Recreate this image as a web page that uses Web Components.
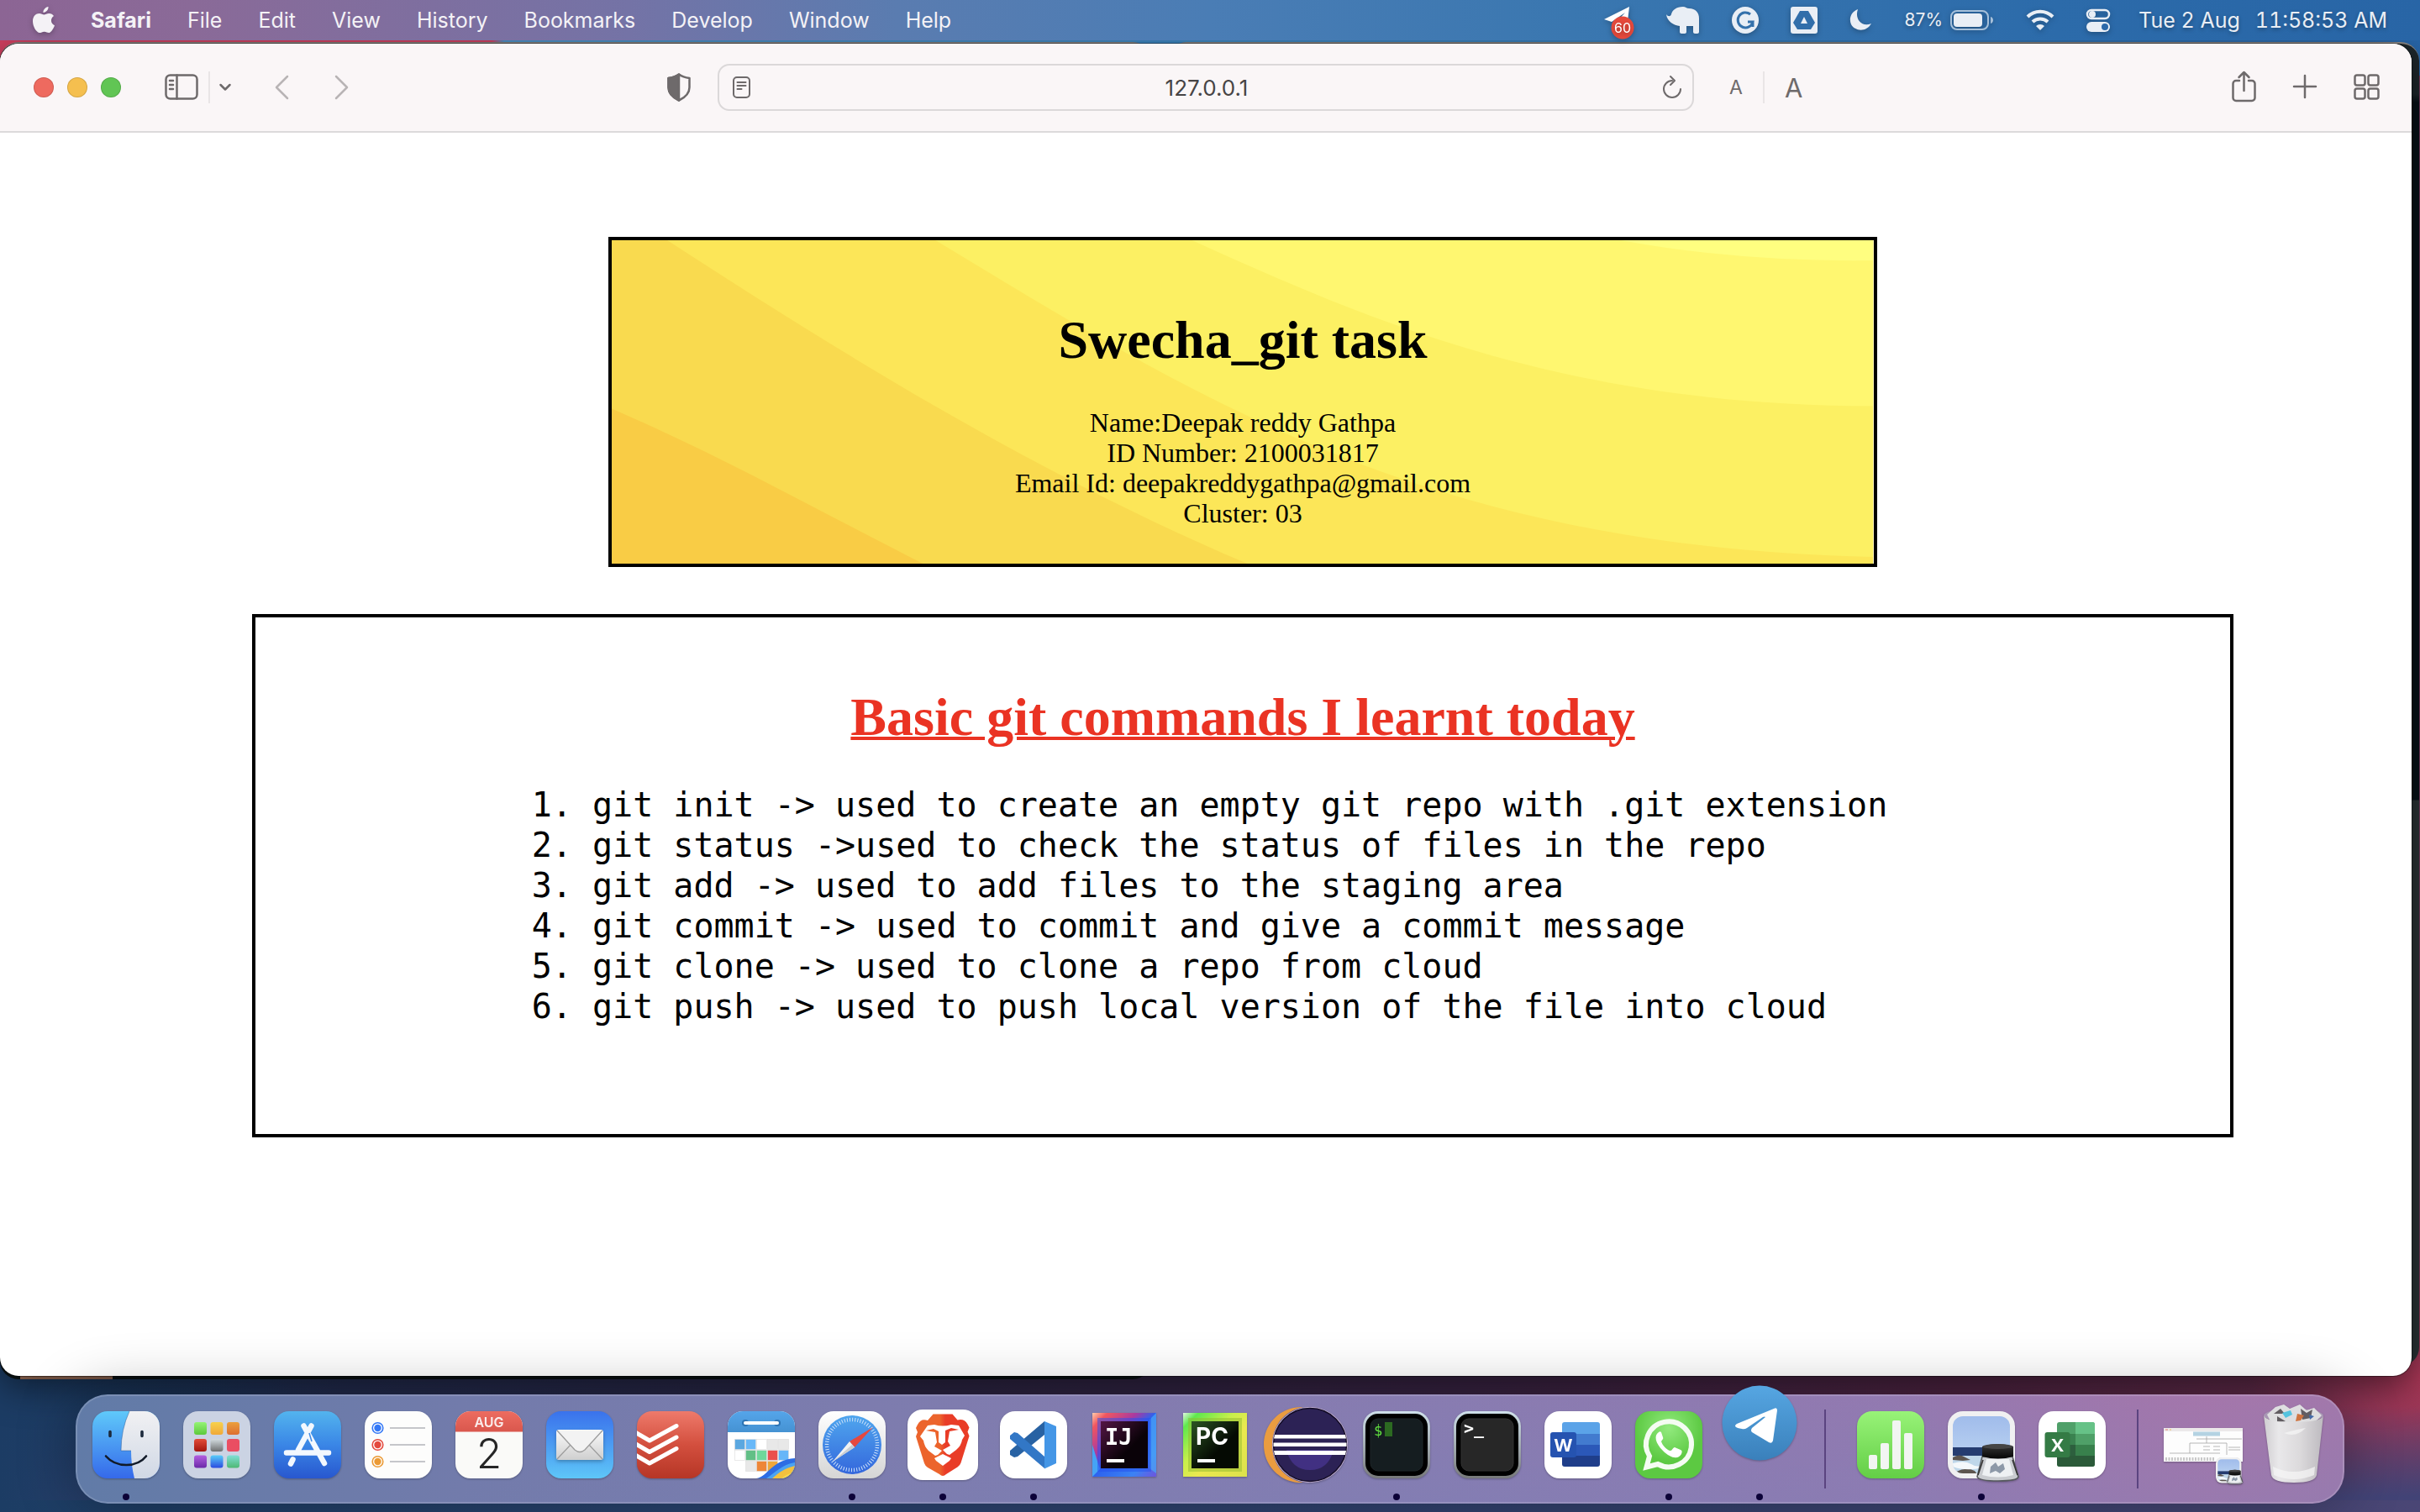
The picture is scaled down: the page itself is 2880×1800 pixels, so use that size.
<!DOCTYPE html>
<html lang="en">
<head>
<meta charset="utf-8">
<title>Swecha_git task</title>
<style>
  html, body { margin: 0; height: 100%; overflow: hidden; }
  body { font-family: Inter, "Liberation Sans", sans-serif; }
</style>
</head>
<body>
<mac-desktop>
  <menu-bar slot="menu"></menu-bar>
  <browser-window address="127.0.0.1">
    <intro-card heading="Swecha_git task">
      <div>Name:Deepak reddy Gathpa</div>
      <div>ID Number: 2100031817</div>
      <div>Email Id: deepakreddygathpa@gmail.com</div>
      <div>Cluster: 03</div>
    </intro-card>
    <command-list heading="Basic git commands I learnt today"></command-list>
  </browser-window>
  <dock-bar slot="dock"></dock-bar>
</mac-desktop>

<script>
const define = (name, render) => customElements.define(name, class extends HTMLElement {
  constructor() { super(); this.attachShadow({ mode: 'open' }); }
  connectedCallback() { this.shadowRoot.innerHTML = render(this); }
});
const BUTTON = 'button{appearance:none;border:0;background:none;padding:0;margin:0;font:inherit;color:inherit;display:flex;align-items:center;justify-content:center}svg{display:block;overflow:visible}';

/* Desktop: wallpaper, windows peeking out behind the browser, and the three rows */
define('mac-desktop', () => `
<style>
  :host { display:flex; flex-direction:column; height:100vh; box-sizing:border-box; padding-bottom:10px; position:relative; overflow:hidden;
    background:
      linear-gradient(180deg, #42437600 93%, #424376 99%),
      radial-gradient(ellipse 200px 170px at 100% 91%, #a83655 0, #a8365500 100%),
      linear-gradient(90deg, #1c3c64 0, #26325a 12%, #2f2a4c 35%, #40284c 60%, #5a294b 82%, #6b3052 94%, #753a5e 100%); }
  .top { position:absolute; left:0; right:0; top:0; height:90px; background:linear-gradient(90deg,#cf4060 0 585px,#4c90c6 600px,#3d86c0 50%,#2765a8 100%); }
  .low { position:absolute; left:0; right:0; bottom:0; height:14px; background:linear-gradient(90deg,#1c3d64,#2a4470 30%,#33426f 65%,#4a4675); }
  .left-glow { position:absolute; left:0; bottom:0; width:400px; height:170px; background:linear-gradient(90deg,#1c3c64,#1c3c6400); }
  .back { position:absolute; box-sizing:border-box; background:#0c1517; border-top:2px solid #8b8784; }
  .a { left:0; top:50px; width:1370px; height:1592px; border-radius:22px; }
  .b { left:1390px; right:1px; top:50px; height:1576px; border-radius:22px; background:linear-gradient(#1d272c 0 60px,#071118 70px 900px,#2a3336 901px); }
  .note { position:absolute; left:24px; top:1618px; width:110px; height:24px; overflow:hidden; background:#a8775f; }
  .stack { position:relative; flex:1; min-height:0; display:flex; flex-direction:column; }
  .win { flex:1; min-height:0; display:flex; margin:4px 10px 22px 0; }
</style>
<div class="top"></div><div class="left-glow"></div><div class="low"></div><div class="back a"></div><div class="back b"></div><div class="note"></div>
<div class="stack"><slot name="menu"></slot><div class="win"><slot></slot></div><slot name="dock"></slot></div>`);

/* Menu bar */
define('menu-bar', () => `
<style>${BUTTON}
  :host { display:flex; align-items:center; height:48px; padding:0 39px; box-sizing:border-box; justify-content:space-between; position:relative; z-index:1;
    color:#f4f2f6; font-size:25px; font-weight:500; line-height:32px; text-shadow:0 2px 5px #0005;
    background:linear-gradient(90deg,#8c6594 0,#8a6a98 8%,#7473a6 26%,#5a7cb0 37%,#4a7db5 50%,#3a77b0 65%,#2c6baa 85%,#2865a6 100%); }
  nav, .status { display:flex; align-items:center; }
  nav { gap:43px; font-weight:400; }
  nav button:nth-child(2) { font-weight:700; }
  svg { filter:drop-shadow(0 2px 3px #0004); }
  .status { gap:38px; color:#e9eef5; fill:#e9eef5; font-weight:400; }
  .status .clock { gap:18px; display:flex; margin-left:-4px; white-space:pre; font-variant-numeric:tabular-nums; }
  .bat { display:flex; align-items:center; gap:9px; font-size:21px; }
</style>
<nav>
  <button aria-label="Apple"><svg width="26" height="32" viewBox="0 0 26 32" fill="#f4f2f6"><path d="M18.500 0c.4 3.400-2.700 7-6 6.900C12.100 3.700 15.300.4 18.500 0zM25 11c-4.500 3-3.700 9.300 1 11.300-1 3-3.500 7.700-6 8.600-2.200.6-3.600-1.200-6.300-1.200s-4 1.700-6 1.300C4 30.200 0 23.500 0 17.300 0 11 4 8 7.600 8c2.300 0 4.300 1.500 5.800 1.500S17 7.900 19.500 8c2.300.1 4.200 1.100 5.500 3z"/></svg></button>
  <button>Safari</button><button>File</button><button>Edit</button><button>View</button><button>History</button><button>Bookmarks</button><button>Develop</button><button>Window</button><button>Help</button>
</nav>
<div class="status">
  <svg width="36" height="32" viewBox="0 0 36 32"><path d="M0 15 30 0 27 26 13 20 25 7 9 18z" fill="#fff"/><circle cx="22" cy="25" r="13.500" fill="#e5493c"/><text x="22" y="31" text-anchor="middle" font-size="16" font-weight="400" fill="#fff" font-family="Inter">60</text></svg>
  <svg width="40" height="32" viewBox="0 0 40 32"><path d="M0 9c2 3 5 3 6 0C7 4 12 0 20 0c3 0 4 2 7 2 8 0 12 5 12 12v16c0 1-1 2-2 2h-3c-1 0-2-1-2-2v-7h-8v7c0 1-1 2-2 2h-4c-1 0-2-1-2-2v-7C9 22 1 18 0 9z"/></svg>
  <svg width="32" height="32" viewBox="0 0 32 32"><circle cx="16" cy="16" r="16"/><path d="M22 9a9 9 0 1 0 3 9h-6M25 24v-6" fill="none" stroke="#3471ab" stroke-width="3"/></svg>
  <svg width="32" height="32" viewBox="0 0 32 32"><rect width="32" height="32" rx="3"/><path d="M11 5h10l8 14-5 8H8l-5-8z" fill="#316eaa"/><path d="M16 12l4 8h-8z"/></svg>
  <svg width="28" height="28" viewBox="0 0 28 28"><path d="M10 1C2 4-1 12 2 19c4 8 18 10 24-1C14 23 6 12 10 1z"/></svg>
  <div class="bat"><span>87%</span><svg width="52" height="24" viewBox="0 0 52 24"><rect x="1" y="1" width="44" height="22" rx="7" fill="none" stroke="#a6c0da" stroke-width="2"/><rect x="4" y="4" width="34" height="16" rx="4"/><path d="M48 8c4 1 4 7 0 8z" fill="#a6c0da"/></svg></div>
  <svg width="34" height="26" viewBox="0 0 34 26" fill="none" stroke="#e9eef5" stroke-width="4"><path d="M2 9a21 21 0 0 1 30 0M8 15a13 13 0 0 1 18 0"/><path d="M17 25l-5-5a7 7 0 0 1 10 0z" fill="#e9eef5" stroke="none"/></svg>
  <svg width="28" height="28" viewBox="0 0 28 28"><rect x="1" y="2" width="26" height="10" rx="5" fill="none" stroke="#e9eef5" stroke-width="2.500"/><circle cx="7" cy="7" r="4"/><rect y="16" width="28" height="12" rx="6"/><circle cx="22" cy="22" r="4" fill="#2c69a9"/></svg>
  <div class="clock"><span>Tue 2 Aug</span><span>11:58:53 AM</span></div>
</div>`);

/* Browser window */
define('browser-window', el => `
<style>${BUTTON}
  :host { flex:1; display:flex; flex-direction:column; background:#fff; border-radius:22px; overflow:hidden; box-shadow:0 0 0 1px #0006, 0 12px 44px #0008; }
  header { display:grid; grid-template-columns:1fr minmax(0,1162px) 1fr; align-items:center; height:104px; background:#faf6f7; border-bottom:2px solid #dcdadb; color:#6e6a6b; }
  .side { display:flex; align-items:center; }
  .left { padding:0 32px 0 40px; } .right { padding:0 38px 0 42px; }
  .lights { display:flex; gap:16px; margin-right:52px; }
  .lights button { width:24px; height:24px; border-radius:50%; box-shadow:inset 0 0 0 1px #0002; }
  .sep { width:2px; height:38px; background:#e9e5e6; }
  .push { margin-left:auto; }
  form { height:56px; box-sizing:border-box; border:2px solid #dbd8d9; border-radius:14px; display:flex; align-items:center; padding:0 13px 0 16px; }
  input { flex:1; min-width:0; border:0; background:none; outline:0; text-align:center; font:400 26px/32px Inter,"Liberation Sans",sans-serif; color:#474445; padding:2px 0 0; }
  svg { fill:none; stroke:currentColor; stroke-width:2.500; stroke-linecap:round; stroke-linejoin:round; }
  .tools { display:flex; gap:44px; }
  main { flex:1; min-height:0; display:flex; flex-direction:column; align-items:center; gap:56px; padding:124px 212px 0 300px; box-sizing:border-box; }
</style>
<header>
  <div class="side left">
    <div class="lights"><button aria-label="Close" style="background:#ee6a5f"></button><button aria-label="Minimise" style="background:#f5bf4f"></button><button aria-label="Zoom" style="background:#61c554"></button></div>
    <button aria-label="Sidebar"><svg width="40" height="32" viewBox="0 0 40 32"><rect x="1.500" y="1.500" width="37" height="28" rx="5"/><path d="M14.500 1.500v28M6 8h4M6 13h4M6 18h4"/></svg></button>
    <div class="sep" style="margin:0 11px 0 12px"></div>
    <button aria-label="Tab groups"><svg width="14" height="10" viewBox="0 0 14 10" stroke-width="3"><path d="M1.500 2 7 7.500 12.500 2"/></svg></button>
    <button aria-label="Back" style="margin-left:52px;color:#b8b4b5"><svg width="16" height="28" viewBox="0 0 16 28"><path d="M15 1 2 14l13 13"/></svg></button>
    <button aria-label="Forward" style="margin-left:56px;color:#b8b4b5"><svg width="16" height="28" viewBox="0 0 16 28"><path d="m1 1 13 13L1 27"/></svg></button>
    <button class="push" aria-label="Privacy report"><svg width="28" height="34" viewBox="0 0 28 34"><path d="M14 1.500c4 3 8 4 12.500 4.500v11c0 7-5 12-12.500 15.500C6.500 29 1.500 24 1.500 17V6C6 5.500 10 4.500 14 1.500z"/><path d="M14 1.500v31C6.500 29 1.500 24 1.500 17V6C6 5.500 10 4.500 14 1.500z" fill="currentColor"/></svg></button>
  </div>
  <form>
    <button type="button" aria-label="Reader"><svg width="21" height="26" viewBox="0 0 21 26" style="stroke-width:2"><rect x="1" y="1" width="19" height="24" rx="4"/><path d="M5.500 7h10M5.500 11h10M5.500 15h5"/></svg></button>
    <input aria-label="Address" value="${el.getAttribute('address')}">
    <button type="button" aria-label="Reload"><svg width="22" height="26" viewBox="0 0 22 26" style="stroke-width:2"><path d="M11 5A10 10 0 1 0 21 15M9 0l5 5-5 5"/></svg></button>
  </form>
  <div class="side right">
    <button style="font-size:23px" aria-label="Smaller text">A</button>
    <div class="sep" style="margin:0 24px"></div>
    <button style="font-size:31px" aria-label="Larger text">A</button>
    <div class="tools push">
      <button aria-label="Share"><svg width="29" height="38" viewBox="0 0 29 38"><path d="M9 11H5a3.500 3.500 0 0 0-3.500 3.500v17A3.500 3.500 0 0 0 5 35h19a3.500 3.500 0 0 0 3.500-3.500v-17A3.500 3.500 0 0 0 24 11h-4M14.500 23V1M8.500 7l6-6 6 6"/></svg></button>
      <button aria-label="New tab"><svg width="28" height="28" viewBox="0 0 28 28"><path d="M14 0v26M1 13h26"/></svg></button>
      <button aria-label="Tab overview"><svg width="31" height="31" viewBox="0 0 31 31"><rect x="1.500" y=".5" width="12" height="12" rx="2.500"/><rect x="17.500" y=".5" width="12" height="12" rx="2.500"/><rect x="1.500" y="16.500" width="12" height="12" rx="2.500"/><rect x="17.500" y="16.500" width="12" height="12" rx="2.500"/></svg></button>
    </div>
  </div>
</header>
<main><slot></slot></main>`);

const PAGE_TEXT = 'h1{margin:43px 0 44px;font-size:64px;line-height:72px;font-weight:700;text-align:center}';

/* Yellow card with the wave artwork behind its text */
define('intro-card', el => `
<style>${PAGE_TEXT}
  :host { display:block; position:relative; width:64%; box-sizing:border-box; border:4px solid #000; padding:40px 40px 42px; text-align:center;
    font:32px/36px "Liberation Serif","Times New Roman",serif; color:#000; overflow:hidden; }
  svg { position:absolute; inset:0; width:100%; height:100%; }
  .text { position:relative; display:flow-root; }
</style>
<svg viewBox="0 0 1500 384" preserveAspectRatio="none" aria-hidden="true">
  <rect width="1500" height="384" fill="#f9cc45"/>
  <path d="M0 200C130 256 240 318 370 384H1500V0H0z" fill="#f9da4f"/>
  <path d="M66 0C260 126 500 276 756 384H1500V0z" fill="#fce658"/>
  <path d="M385 0C700 190 970 364 1500 376V0z" fill="#fcf063"/>
  <path d="M690 0C900 95 1130 196 1500 197V0z" fill="#fff770"/>
  <path d="M1200 0Q1340 26 1500 24V0z" fill="#fffe80"/>
</svg>
<div class="text"><h1>${el.getAttribute('heading')}</h1><slot></slot></div>`);

const COMMANDS = [
  'git init -> used to create an empty git repo with .git extension',
  'git status ->used to check the status of files in the repo',
  'git add -> used to add files to the staging area',
  'git commit -> used to commit and give a commit message',
  'git clone -> used to clone a repo from cloud',
  'git push -> used to push local version of the file into cloud'
];
define('command-list', el => `
<style>${PAGE_TEXT}
  :host { display:flow-root; width:100%; box-sizing:border-box; border:4px solid #000; padding:40px 0; font-family:"Liberation Serif","Times New Roman",serif; }
  h1 { color:#ea3323; text-decoration:underline; text-decoration-thickness:4px; }
  ol { margin:0; padding:0 0 88px 401px; font:40px/48px "DejaVu Sans Mono",monospace; color:#000; }
</style>
<h1>${el.getAttribute('heading')}</h1>
<ol>${COMMANDS.map(c => `<li>${c.replace('>', '&gt;')}</li>`).join('')}</ol>`);

/* Dock artwork: every icon is drawn on an 80-unit tile */
const lg = (id, ...c) => `<linearGradient id="${id}" x2="0" y2="1">${c.map((k, i) => `<stop offset="${i / (c.length - 1)}" stop-color="${k}"/>`).join('')}</linearGradient>`;
const tile = fill => `<rect width="80" height="80" rx="18" fill="${fill}"/>`;
const clip = '<clipPath id="c"><rect width="80" height="80" rx="18"/></clipPath>';
const sq = (x, y, f, s = 15, r = 3) => `<rect x="${x}" y="${y}" width="${s}" height="${s}" rx="${r}" fill="${f}"/>`;
const previewArt = `${lg('s', '#9db9ea', '#b4cdf0')}${lg('k', '#3a3a3a', '#050505')}${tile('#f0f0f1')}
  <clipPath id="p"><rect x="6" y="6" width="68" height="68" rx="12"/></clipPath>
  <g clip-path="url(#p)"><rect width="80" height="44" fill="url(#s)"/><rect y="43" width="80" height="11" fill="#253c70"/><rect y="53" width="80" height="22" fill="#bfd7ea"/>
  <path d="M6 55q8-5 15 0l6 3-9 1-12-1zM10 72q12-6 22-1l4 5H8z" fill="#5d554f"/><path d="M6 62q14-4 22 1t14 0v4q-20 5-36-1z" fill="#f4f8fb"/></g>
  <path d="M41 54h36l7 24q-1 5-24 5t-25-5z" fill="#c9ccd0" stroke="#55585c" stroke-width="1.500"/><path d="M46 57h27l5 19q-18 5-37 0z" fill="#eef1f3"/>
  <path d="M51 66l6-5 3 5 6-4 2 7-6 5-5-3-7 3z" fill="#8d99a8"/><path d="M36 76l6-18M83 76l-6-18" stroke="#333" stroke-width="1.500"/>
  <path d="M41 42q18-6 37 0v12q-18 5-37 0z" fill="url(#k)"/><ellipse cx="59.500" cy="42" rx="18" ry="3" fill="#454545"/>`;
const cells = [['#5aa7e0','#68b8f8','#fff','#e8e8e8','#e8e8e8'],['#fff','#62bf86','#6fd89b','#eb4f4d','#67b6f8'],[null,'#e8e8e8','#ee8638','#eea73c']];
const keyTile = (dark, screen) => `${lg('a', '#cfe0ea', '#77797a')}${tile('url(#a)')}<rect x="3" y="3" width="74" height="74" rx="15" fill="#000"/><rect x="9" y="9" width="62" height="62" rx="9" fill="${screen}" stroke="${dark}"/>`;

const APPS = [
 ['Finder', 1, `${clip}${lg('a','#5fc9fa','#3569ea')}${lg('b','#f1f1f3','#d0d8e5')}<g clip-path="url(#c)"><rect width="80" height="80" fill="url(#a)"/><path d="M44 0Q34 22 34 47h12q0 17 4 33h30V0z" fill="url(#b)"/></g><path d="M21 24.500v5M59 24.500v5" stroke="#1d2a3c" stroke-width="3.600" stroke-linecap="round"/><path d="M16 53.500c12 14 37 14 48 0" fill="none" stroke="#111a28" stroke-width="2.600" stroke-linecap="round"/><path d="M44 0Q34 22 34 47h12" fill="none" stroke="#2f5d96" stroke-opacity=".5"/>`],
 ['Launchpad', 0, `${tile('#cbd3e3')}${lg('a','#94f375','#5cc93c')}${lg('b','#f7d14c','#f0a93a')}${lg('d','#eba03c','#dd6e31')}${lg('e','#e34b39','#a3160f')}${lg('f','#d3dce0','#6d6f70')}${lg('g','#b35fe0','#6b2aa8')}${lg('h','#58ccf9','#2b4be0')}${lg('i','#80dfd6','#4fb873')}
   ${sq(13,13,'url(#a)')}${sq(32.5,13,'url(#b)')}${sq(52,13,'url(#d)')}${sq(13,33,'url(#e)')}${sq(32.5,33,'url(#f)')}${sq(52,33,'#ea4e62')}${sq(13,52.5,'url(#g)')}${sq(32.5,52.5,'url(#h)')}${sq(52,52.5,'url(#i)')}`],
 ['App Store', 0, `${lg('a','#53b4ee','#3a86e6','#2857cf')}${tile('url(#a)')}<g stroke="#f3f8fe" stroke-width="6.500" stroke-linecap="round" fill="none"><path d="M44.500 17.500 29 46M15 49.500h50M22.500 57.500l-2.500 5M35.500 17.500 60 62"/></g><path d="M42 26l3 10" stroke="#3d8ae6" stroke-width="1.500"/>`],
 ['Reminders', 0, `${tile('#fdfdfc')}<g stroke="#b3b4b9" stroke-width="1.600"><path d="M30 20h42M30 40h42M30 60h42"/></g>${[['#3478f6',20],['#e4493d',40],['#eb9a35',60]].map(([c,y])=>`<circle cx="15.500" cy="${y}" r="6.300" fill="#fff" stroke="${c}" stroke-width="1.600"/><circle cx="15.500" cy="${y}" r="4.200" fill="${c}"/>`).join('')}`],
 ['Calendar', 0, `${clip}${lg('a','#ed6c60','#d9574d')}${tile('#fafaf8')}<rect width="80" height="24.500" fill="url(#a)" clip-path="url(#c)"/><text x="40" y="19" text-anchor="middle" font-size="16" font-weight="600" fill="#fbeceb">AUG</text><text x="40" y="68" text-anchor="middle" font-size="49" font-weight="300" fill="#262626">2</text>`],
 ['Mail', 0, `${lg('a','#3a72ec','#5ec6f8')}${lg('b','#fafafa','#cfcfcf')}${tile('url(#a)')}<rect x="12" y="22" width="56" height="36" rx="3" fill="url(#b)" filter="drop-shadow(0 2px 2px #0004)"/><path d="M13 57l16-17M67 57 51 40" stroke="#9d9d9d" stroke-width="1.200"/><path d="M13 23l21 23q6 5 12 0l21-23" fill="#f3f3f3" stroke="#9d9d9d" stroke-width="1.300"/>`],
 ['Todoist', 0, `${clip}${lg('a','#ee7a6b','#d34f3e','#b63626')}${tile('url(#a)')}<g clip-path="url(#c)" fill="none" stroke="#fff" stroke-width="5" stroke-linejoin="round" stroke-linecap="round"><path d="M-3 24.500 15 35 47 17.500M-3 38 15 48.500 47 31M-3 51.500 15 62 47 44.500"/></g>`],
 ['Fantastical', 0, `${clip}${lg('a','#55a5ea','#4592d2')}${tile('#fff')}<g clip-path="url(#c)"><rect width="80" height="25" fill="url(#a)"/>${cells.map((r,j)=>r.map((f,i)=>f?`<rect x="${8.5+i*13}" y="${33.5+j*13}" width="12" height="12" fill="${f}" stroke="#ddd" stroke-width=".6"/>`:'').join('')).join('')}<path d="M34 80C48 78 52 58 80 56V80z" fill="#2d6de4"/><path d="M46 80C58 72 64 64 80 61v19z" fill="#4ba3f2"/><path d="M53 80C62 72 68 68 80 65v15z" fill="#f3c13e"/><path d="M64 80q7-6 16-7v7z" fill="#f7dc4b"/></g><circle cx="21" cy="14" r="4" fill="#2d74b4"/><circle cx="59" cy="14" r="4" fill="#2d74b4"/><path d="M21 14h38" stroke="#fff" stroke-width="4" stroke-linecap="round"/>`],
 ['Safari', 1, `${lg('a','#fff','#d5d5d5')}${lg('b','#4fa6ee','#3467dc')}${tile('url(#a)')}<circle cx="40" cy="40" r="35" fill="url(#b)"/><circle cx="40" cy="40" r="30" fill="none" stroke="#cde2fa" stroke-width="4.500" stroke-dasharray="1 2.140"/><path d="M65 19 37 36l6 7z" fill="#e5483f"/><path d="M17 60l20-24 6 7z" fill="#f2f2f2"/><path d="M17 60l26-17-3-3z" fill="#c9cdd2"/>`],
 ['Brave', 1, `<linearGradient id="a"><stop offset=".45" stop-color="#ec642c"/><stop offset=".55" stop-color="#e93c27"/></linearGradient><rect x="-2" y="-2" width="84" height="84" rx="18" fill="#fff"/><path d="M28.500 3.500h23l6 7q8-2 12 5l2 4-2 5 2 5-10 32q-1 3-4 5L44 75q-4 4-8 0L22 67q-3-2-4-5L8 30l2-5-2-5 2-4q4-8 12-5z" fill="url(#a)"/><path d="M22 17l8-1q10 3 20 0l9 1 7 12-3 5q-1 7-7 12l-8 6-3-1-5-5 9-5-3-5 2-12 11-2-9-2-7 3v14l-4 3-4-3V24l-6-3-9 2 11 2 2 12-3 5 9 5-5 5-3 1-8-6q-5-5-6-12l-4-5z" fill="#fff"/><path d="M40 51l10 5-2 3-8 6-8-6-2-3z" fill="#fff"/>`],
 ['Visual Studio Code', 1, `${tile('#fff')}<path d="M53 12 12 47v5l5 3 4-1 32-26z" fill="#2862a3"/><path d="M17 25l-5 4v4l41 35V54L21 26z" fill="#3277c6"/><path d="M53 12l14 6v44l-14 6.500z" fill="#4496e6"/>`],
 ['IntelliJ IDEA', 0, `<linearGradient id="a" x2="1" y2="1"><stop stop-color="#fca"/><stop offset=".12" stop-color="#f0565f"/><stop offset=".35" stop-color="#a93aa0"/><stop offset=".5" stop-color="#2d62ee"/><stop offset=".8" stop-color="#3b82f4"/><stop offset="1" stop-color="#6e55dd"/></linearGradient><linearGradient id="b" x2="1" y2="1"><stop stop-color="#541645"/><stop offset=".6" stop-color="#0a0208"/></linearGradient><rect x="2" y="2" width="76" height="76" fill="url(#a)"/><path d="M78 2v72l-8-6V10z" fill="#4aa6f5" opacity=".7"/><path d="M2 40v38l9-9z" fill="#45a4f5"/><rect x="8" y="8" width="64" height="64" fill="#234ff0" opacity=".5"/><rect x="12" y="12" width="56" height="56" fill="url(#b)"/><text x="17" y="40" font-family="DejaVu Sans Mono" font-weight="700" font-size="27" fill="#fff">IJ</text><rect x="19" y="57" width="21" height="4" fill="#fff"/>`],
 ['PyCharm', 0, `<linearGradient id="a" x2="1" y2="1"><stop stop-color="#dff7e0"/><stop offset=".12" stop-color="#5fe84d"/><stop offset=".4" stop-color="#c8f04b"/><stop offset=".6" stop-color="#ebe84f"/><stop offset="1" stop-color="#dbe24b"/></linearGradient><linearGradient id="b" x2="1" y2="1"><stop stop-color="#2b5522"/><stop offset=".6" stop-color="#050a03"/></linearGradient><rect x="2" y="2" width="76" height="76" fill="url(#a)"/><rect x="8" y="8" width="64" height="64" fill="#8fb92f" opacity=".5"/><rect x="12" y="12" width="56" height="56" fill="url(#b)"/><text x="17" y="40" font-weight="700" font-size="28" fill="#fff">PC</text><rect x="19" y="57" width="21" height="4" fill="#fff"/>`],
 ['Eclipse', 0, `<path d="M37-5C11-6-10 14-10 40s21 46 47 45C13 80 0 62 0 40S13 0 37-5z" fill="#ea9c40"/><circle cx="45" cy="40" r="45" fill="#c9b5d8"/><circle cx="45" cy="40" r="43.500" fill="#2c2255" stroke="#120c25" stroke-width="1.500"/><path d="M17 46h56q-6 24-28 24T17 46z" fill="#413082"/><g fill="#fff"><path d="M3 28h84l1 4.500H2zM1.500 37.500h87v4.500h-87zM2 47h86l-1 5H3z"/></g>`],
 ['iTerm', 1, `${keyTile('#1f2729','#151d20')}<text x="13" y="29" font-family="DejaVu Sans Mono" font-size="17" fill="#5fdc3f">$</text><rect x="26" y="13" width="9" height="17" fill="#2c6a21"/>`],
 ['Terminal', 0, `${keyTile('#333','#272727')}<text x="12" y="27" font-family="DejaVu Sans Mono" font-weight="700" font-size="20" fill="#fff">&gt;_</text>`],
 ['Word', 0, `${tile('#fff')}<clipPath id="d"><rect x="21" y="13" width="45" height="53" rx="3"/></clipPath><g clip-path="url(#d)"><rect x="21" y="13" width="45" height="14" fill="#5ba3e8"/><rect x="21" y="27" width="45" height="13" fill="#427bcf"/><rect x="21" y="40" width="45" height="13" fill="#2b58b8"/><rect x="21" y="53" width="45" height="13" fill="#1f3e8a"/></g><rect x="7" y="25" width="31" height="30" rx="3" fill="#2553b0"/><text x="22.500" y="48" text-anchor="middle" font-family="Open Sans" font-weight="700" font-size="22" fill="#fff">W</text>`],
 ['WhatsApp', 1, `<radialGradient id="a" cy=".25"><stop stop-color="#92ea7e"/><stop offset="1" stop-color="#5cc942"/></radialGradient>${tile('url(#a)')}<path d="M13.500 66.500l3.500-13a27 27 0 1 1 10 9.500z" fill="none" stroke="#f4fcf2" stroke-width="6"/><path d="M28 25c-6 4-4 13 5 22 9 9 18 11 22 4 1-3 1-4-1-5l-7-3c-2 0-3 4-5 4-4 0-10-7-11-11 1-2 3-3 2-5l-2-6c-1-1-2-1-3 0z" fill="#fff"/>`],
 ['Telegram', 1, `${lg('a','#56a6e2','#3a80bb')}<circle cx="40" cy="14" r="44.500" fill="url(#a)"/><path d="M17 15 61-3q4-2 4 2l-5 36q-1 4-5 2L35 25q-2-2 0-5L51 7q-1-1-3 0L29 20q-3 2-6 1-12-2-6-6z" fill="#fff" transform="translate(-4 0)"/>`],
 null,
 ['Numbers', 0, `${lg('a','#98f378','#63ce46')}${tile('url(#a)')}<g fill="#f2f5f2"><rect x="14" y="52" width="10" height="17" rx="2"/><rect x="28" y="38" width="10" height="31" rx="2"/><rect x="42" y="11" width="10" height="58" rx="2"/><rect x="56" y="26" width="10" height="43" rx="2"/></g>`],
 ['Preview', 1, previewArt],
 ['Excel', 0, `${tile('#fff')}<clipPath id="d"><rect x="22" y="13" width="45" height="53" rx="3"/></clipPath><g clip-path="url(#d)"><rect x="22" y="13" width="45" height="53" fill="#4fa069"/><rect x="44" y="13" width="23" height="14" fill="#66c287"/><rect x="22" y="27" width="22" height="13" fill="#3a8250"/><rect x="44" y="27" width="23" height="13" fill="#4fa068"/><rect x="22" y="40" width="22" height="13" fill="#2d5f3e"/><rect x="44" y="40" width="23" height="13" fill="#38804c"/><rect x="22" y="53" width="45" height="13" fill="#2b5a39"/></g><rect x="7.500" y="25" width="30" height="30" rx="3" fill="#347b45"/><text x="22.500" y="48" text-anchor="middle" font-family="Open Sans" font-weight="700" font-size="22" fill="#fff">X</text>`],
 null,
 ['Minimised document', 0, `<rect x="-7" y="20" width="94" height="40" fill="#fdfdfd"/><rect x="-7" y="20" width="94" height="4" fill="#ece9ea"/><path d="M-5 22h3" stroke="#e9836f"/><path d="M0 22h2" stroke="#f0bf60"/><rect x="28" y="24.500" width="32" height="5" fill="#b4d2e2"/><g stroke="#a5a5a5" stroke-width=".8" fill="none"><path d="M44 30v8M32 33h26M58 33h28M24 38h44M24 38v12M68 38v14M0 50h60M40 42h8M52 42h8M40 46h8M52 46h8M70 43h14M70 46h14"/><path d="M-5 57h58" stroke-width="4" stroke-dasharray="2 1.500" opacity=".6"/></g><svg x="55" y="55" width="32" height="32" viewBox="0 0 84 84">${previewArt}</svg>`],
 ['Bin', 0, `<linearGradient id="a"><stop stop-color="#cfcdd0"/><stop offset=".25" stop-color="#e9e8ea"/><stop offset=".6" stop-color="#dcdadc"/><stop offset="1" stop-color="#bdbabf"/></linearGradient><ellipse cx="39.500" cy="5" rx="35.500" ry="8" fill="#a896b4"/><path d="M8 4 18-5l10-3 7 5 12-5 8 7 9-3 9 9-9 9-30 2L12 12z" fill="#dedee0"/><path d="M16 3l8-6 5 6zM48-3l7 5 7-4-2 10-10 2zM20 6l10 6-10 1z" fill="#625d62"/><path d="M26 2l10-3 2 5-8 4z" fill="#55c3df"/><path d="M44 3l8 2-4 6-6 1z" fill="#cf7440"/><path d="M58 4l6 2-5 4z" fill="#446ba8"/><path d="M4 5q3 8 36 8t35-8L67 76q-2 9-27 9t-27-9z" fill="url(#a)"/><path d="M28 26q14 6 26-6-8 1-26 6zM15 66q24 12 50 0l-1 10q-24 10-48 0z" fill="#f6f6f7" opacity=".7"/>`]
];

define('dock-item', el => {
  const [name, running, art] = APPS[+el.getAttribute('app')];
  return `
<style>${BUTTON}
  :host { display:block; flex:0 1 108px; }
  button { width:100%; height:130px; flex-direction:column; position:relative; }
  svg { font-family:Inter,sans-serif; filter:drop-shadow(0 1px 1px #0004); }
  i { position:absolute; left:50%; bottom:4px; width:8px; height:8px; margin-left:-4px; border-radius:50%; background:#0c0238; }
</style>
<button aria-label="${name}"><svg width="108" height="130" viewBox="-14 -20 108 130">${art}</svg>${running ? '<i></i>' : ''}</button>`;
});

define('dock-bar', () => `
<style>
  :host { display:flex; align-self:center; height:130px; padding:0 6px; border-radius:38px; position:relative;
    background:linear-gradient(172deg,#0000 35%,#6a86bd66 100%),linear-gradient(90deg,#617ba7 0,#727bab 17%,#7d7cae 35%,#8a7bb0 60%,#9a77ae 80%,#b472a6 94%,#b473a5 100%);
    box-shadow:inset 0 0 0 2px #ffffff28, 0 0 70px #0005; }
  hr { flex:0 0 2px; height:94px; margin:18px 23px; border:0; background:#5b4480; }
</style>
${APPS.map((a, i) => a ? `<dock-item app="${i}"></dock-item>` : '<hr>').join('')}`);
</script>
</body>
</html>
